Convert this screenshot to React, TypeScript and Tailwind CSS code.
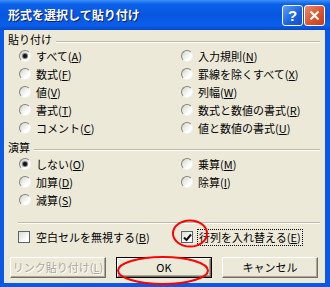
import React from "react";

const Key = ({ t, k }: { t: string; k: string }) => (
	<>
		{t}(<u>{k}</u>)
	</>
);

const Radio = ({ t, k, on }: { t: string; k: string; on?: boolean }) => (
	<div className="flex items-center gap-[5px] h-[18px]">
		<span className="w-[12px] h-[12px] rounded-full border border-t-[#85857d] border-l-[#85857d] border-r-[#f4f4ee] border-b-[#f4f4ee] bg-[linear-gradient(135deg,#d4d4cc,#ffffff_70%)] flex items-center justify-center shrink-0">
			{on && <span className="w-[4px] h-[4px] rounded-full bg-[#111] shadow-[0_0_1px_1px_#6a6a6a]" />}
		</span>
		<span className="text-[11px] leading-none text-black whitespace-nowrap">
			<Key t={t} k={k} />
		</span>
	</div>
);

const Check = ({ t, k, on, focus }: { t: string; k: string; on?: boolean; focus?: boolean }) => (
	<div className="flex items-center gap-[4px] h-[18px]">
		<span className="w-[12px] h-[12px] border border-[#5a6470] bg-[linear-gradient(135deg,#dcdcd4,#ffffff_75%)] flex items-center justify-center shrink-0">
			{on && (
				<svg width="9" height="9" viewBox="0 0 9 9">
					<polyline points="1,4.5 3.5,7 8,1.5" fill="none" stroke="#111" strokeWidth="2" />
				</svg>
			)}
		</span>
		<span className={`text-[11px] leading-none text-black whitespace-nowrap px-[1px] py-[2px] ${focus ? "border border-dotted border-black" : "border border-transparent"}`}>
			<Key t={t} k={k} />
		</span>
	</div>
);

const GroupLabel = ({ t }: { t: string }) => (
	<div className="flex items-center h-[15px] pl-[4px] pr-[5px]">
		<span className="text-[11px] leading-none text-black">{t}</span>
		<div className="flex-1 ml-[4px] mt-[4px] h-[2px] border-t border-t-[#bcb9a8] border-b border-b-white" />
	</div>
);

const Btn = ({ children, disabled, def }: { children: React.ReactNode; disabled?: boolean; def?: boolean }) => {
	const inner = (
		<div className="size-full flex items-center justify-center border border-t-white border-l-white border-r-[#716f64] border-b-[#716f64] shadow-[inset_-1px_-1px_0_#aca899] bg-[#ece9d8]">
			<span className={`text-[11px] leading-none ${disabled ? "text-[#aca899] [text-shadow:1px_1px_0_#fff]" : "text-black"}`}>{children}</span>
		</div>
	);
	return def ? <div className="w-[96px] h-[21px] border border-black">{inner}</div> : <div className="w-[96px] h-[21px]">{inner}</div>;
};

const App = () => {
	return (
		<div className="relative w-[330px] h-[287px] flex flex-col bg-[#0a58e4] font-['Noto_Sans_CJK_JP',sans-serif] overflow-hidden">
			{/* title bar */}
			<div className="h-[30px] flex items-center pl-[8px] pr-[5px] bg-[linear-gradient(180deg,#3d90f7_0%,#0b60e9_14%,#0856df_50%,#0a5fea_85%,#0648cc_100%)]">
				<span className="flex-1 text-white font-bold text-[12px] leading-none [text-shadow:1px_1px_0_#0a1e7a]">形式を選択して貼り付け</span>
				<div className="flex gap-[1px]">
					<div className="w-[21px] h-[21px] rounded-[3px] border border-white bg-[linear-gradient(135deg,#5aa0fb,#1b5fdc_60%,#1850c8)] flex items-center justify-center">
						<span className="text-white font-bold text-[15px] leading-none font-['Liberation_Sans',sans-serif]">?</span>
					</div>
					<div className="w-[21px] h-[21px] rounded-[3px] border border-white bg-[linear-gradient(135deg,#ee8a68,#d9542f_55%,#c2401d)] flex items-center justify-center">
						<svg width="11" height="11" viewBox="0 0 11 11">
							<path d="M1.5 1.5 L9.5 9.5 M9.5 1.5 L1.5 9.5" stroke="#fff" strokeWidth="2.2" />
						</svg>
					</div>
				</div>
			</div>

			{/* client area */}
			<div className="flex-1 ml-[4px] mr-[5px] mb-[4px] bg-[#ece9d8] flex flex-col">
				<div className="mt-[2px]">
					<GroupLabel t="貼り付け" />
				</div>
				<div className="grid grid-cols-[162px_1fr] pl-[15px]">
					<Radio t="すべて" k="A" on />
					<Radio t="入力規則" k="N" />
					<Radio t="数式" k="F" />
					<Radio t="罫線を除くすべて" k="X" />
					<Radio t="値" k="V" />
					<Radio t="列幅" k="W" />
					<Radio t="書式" k="T" />
					<Radio t="数式と数値の書式" k="R" />
					<Radio t="コメント" k="C" />
					<Radio t="値と数値の書式" k="U" />
				</div>

				<div className="mt-[3px]">
					<GroupLabel t="演算" />
				</div>
				<div className="grid grid-cols-[162px_1fr] pl-[15px]">
					<Radio t="しない" k="O" on />
					<Radio t="乗算" k="M" />
					<Radio t="加算" k="D" />
					<Radio t="除算" k="I" />
					<Radio t="減算" k="S" />
				</div>

				<div className="mt-[13px] ml-[14px] mr-[5px] h-[2px] border-t border-t-[#bcb9a8] border-b border-b-white" />

				<div className="mt-[4px] grid grid-cols-[163px_1fr] pl-[14px]">
					<Check t="空白セルを無視する" k="B" />
					<Check t="行列を入れ替える" k="E" on focus />
				</div>

				<div className="mt-[11px] flex gap-[10px] pl-[6px]">
					<Btn disabled>
						<Key t="リンク貼り付け" k="L" />
					</Btn>
					<Btn def>OK</Btn>
					<Btn>キャンセル</Btn>
				</div>
			</div>

			{/* red annotation marks */}
			<svg className="absolute inset-0 pointer-events-none" width="330" height="287" viewBox="0 0 330 287">
				<ellipse cx="190" cy="233.5" rx="17" ry="13" fill="none" stroke="#f00" strokeWidth="2" />
				<ellipse cx="163" cy="270.5" rx="45" ry="13.5" fill="none" stroke="#f00" strokeWidth="2" />
			</svg>
		</div>
	);
};

export default App;
